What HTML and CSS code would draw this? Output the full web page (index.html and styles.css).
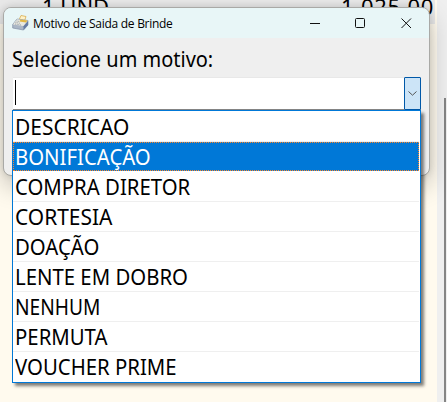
FILE: index.html
```html
<!DOCTYPE html>
<html lang="pt-BR">
<head>
<meta charset="utf-8">
<title>Motivo de Saida de Brinde</title>
<link rel="stylesheet" href="styles.css">
</head>
<body>

<div class="grid-row">
  <span class="qty">1 UND</span>
  <span class="total">1.025,00</span>
</div>
<div class="side"><div class="thumb"></div></div>

<div class="window">
  <div class="titlebar">
    <svg class="app-icon" width="17" height="16" viewBox="0 0 17 16">
      <path d="M7 5 9 .5l5 1L12.500 6z" fill="#fff3c9" stroke="#d9ac4e" stroke-width=".8"/>
      <path d="M.7 9.500 5 4l11 1.500v4.500L11.500 15 .7 13z" fill="#aab6c5" stroke="#8290a6" stroke-width=".7"/>
      <path d="M1 9.500 5 4.200l10.800 1.500L11.500 11z" fill="#e9e9df"/>
      <path d="M8.500 4.500l7 1-1.500 2-6.500-1z" fill="#e2b744"/>
      <path d="M4.500 6l3 .5M3.500 7.500l5 .8M3 9l6 1" stroke="#8c939e" stroke-width=".8" stroke-dasharray="1 .7"/>
      <path d="M11.500 11.300 16 6v4l-4.500 5z" fill="#647ba4"/>
    </svg>
    <span class="title">Motivo de Saida de Brinde</span>
    <svg class="win-buttons" width="102" height="12" viewBox="0 0 102 12" fill="none" stroke="#111">
      <path d="M0 6.500h10"/>
      <rect x="45.500" y="1.500" width="9" height="9" rx="1"/>
      <path d="M91.500 1.500l9.500 9.500M101 1.500l-9.500 9.500"/>
    </svg>
  </div>
  <div class="label"><span>Selecione um motivo:</span></div>
  <div class="combo">
    <div class="caret"></div>
    <div class="drop">
      <svg width="9" height="5" viewBox="0 0 9 5" fill="none" stroke="#555"><path d="M.5 .5l4 3.700 4-3.700"/></svg>
    </div>
  </div>
</div>

<div class="list">
  <div class="item wide"><span>DESCRICAO</span></div>
  <div class="item selected"><span>BONIFICAÇÃO</span></div>
  <div class="item"><span>COMPRA DIRETOR</span></div>
  <div class="item wide"><span>CORTESIA</span></div>
  <div class="item"><span>DOAÇÃO</span></div>
  <div class="item"><span>LENTE EM DOBRO</span></div>
  <div class="item narrow"><span>NENHUM</span></div>
  <div class="item"><span>PERMUTA</span></div>
  <div class="item"><span>VOUCHER PRIME</span></div>
</div>

</body>
</html>
```
FILE: styles.css
```css
* { box-sizing: border-box; }
body {
  margin: 0;
  width: 447px;
  height: 402px;
  position: relative;
  overflow: hidden;
  background: #fffaee;
  font-family: "Noto Sans", "DejaVu Sans", sans-serif;
  font-size: 22px;
  color: #000;
}
.grid-row {
  display: flex;
  justify-content: space-between;
  width: 435px;
  height: 24px;
  padding: 0 1px 0 42px;
  background: #e9e9e9;
  line-height: 12px;
}
.total { letter-spacing: .7px; }
/* scrollbar strip of the form behind */
.side {
  position: absolute;
  top: 0;
  right: 0;
  width: 10px;
  height: 402px;
  background: #efefef;
}
.thumb { width: 2px; height: 304px; margin: 98px 0 0 7px; background: #858585; }
.window {
  position: absolute;
  left: 3px;
  top: 7px;
  width: 427px;
  height: 169px;
  border: 1px solid #a9a9a6;
  border-radius: 8px;
  background: #efefef;
  background-clip: padding-box;
  box-shadow: 0 10px 24px rgba(0, 0, 0, .23), 0 0 7px rgba(0, 0, 0, .12);
}
.titlebar {
  display: flex;
  align-items: center;
  height: 30px;
  padding-left: 8px;
  border-radius: 7px 7px 0 0;
  background: #e8f6f7;
}
.title {
  margin-left: 4px;
  font-family: "Open Sans", sans-serif;
  font-size: 12px;
  letter-spacing: -.28px;
  white-space: nowrap;
}
.win-buttons { margin: 0 17px 0 auto; }
.label { height: 39px; padding-left: 8px; line-height: 40px; white-space: nowrap; }
/* Noto runs wider than the form font */
.label span, .item span {
  display: inline-block;
  transform: scaleX(.925);
  transform-origin: 0 50%;
}
.label span { transform: scaleX(.908); }
.combo {
  display: flex;
  justify-content: space-between;
  width: 408px;
  height: 33px;
  margin-left: 9px;
  border-top: 1px solid #e8e8e8;
  border-bottom: 1px solid #858585;
  background: #fff;
}
.caret { width: 1px; height: 25px; margin: 2px 0 0 2px; background: #000; }
.drop {
  display: flex;
  align-items: center;
  justify-content: center;
  width: 17px;
  height: 33px;
  margin-top: -1px;
  border: 1px solid #0058a8;
  border-radius: 1px;
  background: #cce4f7;
}
.list {
  position: absolute;
  left: 12px;
  top: 110px;
  width: 409px;
  height: 273px;
  padding: 1px 1px 0 0;
  border: 1px solid #0078d7;
  background: #fff;
  box-shadow: 3px 3px 3px rgba(0, 0, 0, .5);
}
.item {
  height: 30px;
  padding-left: 2px;
  border-bottom: 1px solid #efefef;
  line-height: 29px;
  white-space: nowrap;
}
.item:last-child { border-bottom: 0; }
.item.wide span { transform: scaleX(.952); }
.item.narrow span { transform: scaleX(.87); }
.selected {
  height: 29px;
  margin-bottom: 1px;
  padding-left: 1px;
  border: 1px dotted #ff8728;
  line-height: 27px;
  background: #0078d7;
  color: #fff;
}
```
